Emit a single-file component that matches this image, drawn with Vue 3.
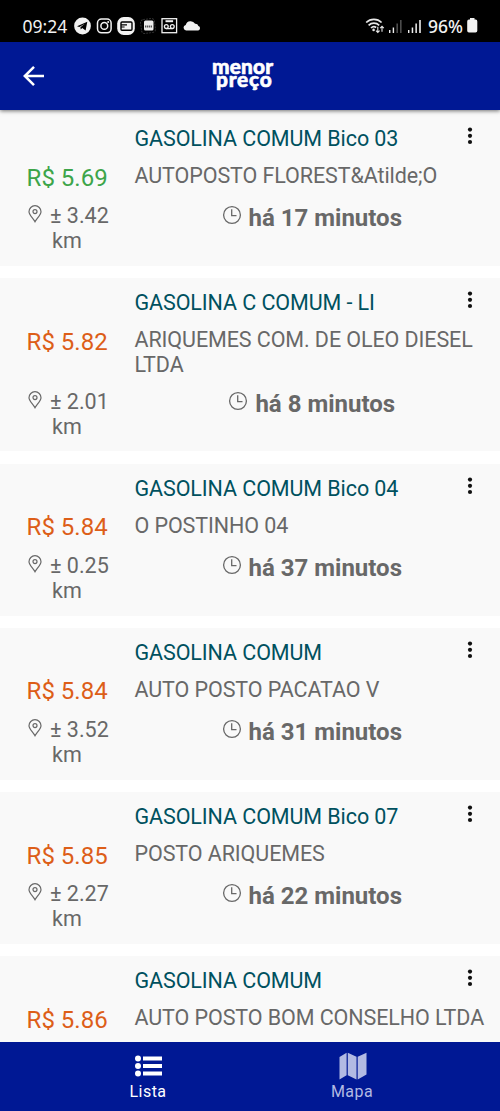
<script setup>
const stations = [
  { product: 'GASOLINA COMUM Bico 03', price: '5.69', name: 'AUTOPOSTO FLOREST&Atilde;O', km: '3.42', ago: '17', best: true },
  { product: 'GASOLINA C COMUM - LI', price: '5.82', name: 'ARIQUEMES COM. DE OLEO DIESEL LTDA', km: '2.01', ago: '8' },
  { product: 'GASOLINA COMUM Bico 04', price: '5.84', name: 'O POSTINHO 04', km: '0.25', ago: '37' },
  { product: 'GASOLINA COMUM', price: '5.84', name: 'AUTO POSTO PACATAO V', km: '3.52', ago: '31' },
  { product: 'GASOLINA COMUM Bico 07', price: '5.85', name: 'POSTO ARIQUEMES', km: '2.27', ago: '22' },
  { product: 'GASOLINA COMUM', price: '5.86', name: 'AUTO POSTO BOM CONSELHO LTDA' },
]
</script>

<template>
  <div class="screen">
    <div class="status">
      <span class="clock">09:24</span>
      <svg class="apps" width="128" height="20" viewBox="0 0 128 20">
        <circle cx="8.5" cy="10" r="8.4" fill="#f2f2f2" />
        <path d="M3 10.2 13.3 5.7 11.6 14.4 8.2 12 6.7 13.5 6.4 11.3 10.8 7.7 5.3 11Z" fill="#000" />
        <g fill="none" stroke="#f2f2f2">
          <rect x="23.5" y="3" width="13.6" height="13.8" rx="4" stroke-width="1.5" />
          <circle cx="30.3" cy="9.9" r="3.4" stroke-width="1.5" />
        </g>
        <circle cx="34.2" cy="6" r="1" fill="#f2f2f2" />
        <rect x="43.2" y="1" width="17.6" height="18" rx="6.5" fill="#f2f2f2" />
        <rect x="47" y="6" width="11" height="8.2" rx="1" fill="none" stroke="#000" stroke-width="1.4" />
        <path d="M47 8.8h6M47 11h3.6" fill="none" stroke="#000" stroke-width="1.2" />
        <rect x="67" y="3" width="14" height="14" rx="3" fill="none" stroke="#333" stroke-dasharray="2 1" transform="rotate(-8 74 10)" />
        <rect x="70" y="4.5" width="9.5" height="10" rx="1.5" fill="#ececec" />
        <path d="M71 10.4h7.5" stroke="#555" stroke-width="2" stroke-dasharray="1.3 .6" />
        <g fill="none" stroke="#f2f2f2" stroke-width="1.3">
          <rect x="88" y="2.7" width="14.6" height="14" />
          <path d="M91.5 5.2h7.6" stroke-width="2" />
          <circle cx="92.3" cy="10.6" r="1.9" />
          <circle cx="98.3" cy="10.6" r="1.9" />
          <path d="M92.3 12.6h6" />
        </g>
        <path d="M112 14.4a2.8 2.8 0 0 1-.3-5.5 5.2 5.2 0 0 1 9.4-1.1 3.2 3.2 0 0 1 3.3 2.3 2.2 2.2 0 0 1-.2 4.3Z" fill="#f2f2f2" />
      </svg>
      <svg class="signals" width="58" height="20" viewBox="0 0 58 20">
        <g fill="none" stroke="#e8e8e8" stroke-width="1.7">
          <path d="M1.2 6.5a11 11 0 0 1 15.4 0" />
          <path d="M3.6 9.3a7.6 7.6 0 0 1 10.6 0" />
          <path d="M6 12a4.2 4.2 0 0 1 5.2-.5" />
          <path d="M12.8 10.8v5.5m-1.8-1.6 1.8 1.8 1.8-1.8M17 15.8v-5.4m-1.8 1.8 1.8-1.8 1.8 1.8" stroke-width="1.1" />
        </g>
        <circle cx="8.6" cy="13.9" r="1.3" fill="#e8e8e8" />
        <g fill="#eee">
          <path d="M24 14h1.4v3H24zM27.7 11.5h1.4V17h-1.4zM43 14h1.4v3H43zM46.7 11.5h1.5V17h-1.5zM50.4 7.5h1.5V17h-1.5zM54.2 4h1.6v13h-1.6z" />
          <path d="M31.5 7.5h1.3V17h-1.3zM35.2 4h1.3v13h-1.3z" opacity=".4" />
        </g>
      </svg>
      <span class="percent">96%</span>
      <svg class="battery" width="11" height="15" viewBox="0 0 11 15">
        <path d="M3 0h4.5v1.6h1.2A1.8 1.8 0 0 1 10.3 3.4v9.4a1.8 1.8 0 0 1-1.8 1.8H2a1.8 1.8 0 0 1-1.8-1.8V3.4A1.8 1.8 0 0 1 2 1.6h1Z" fill="#f2f2f2" />
      </svg>
    </div>

    <header class="bar">
      <svg class="back" width="24" height="22" viewBox="0 0 24 22" fill="none" stroke="#fff" stroke-width="2.5">
        <path d="M22 11H3M12 1.8 2.8 11l9.2 9.2" />
      </svg>
      <div class="logo"><span class="menor">menor</span><span class="preco">preço</span></div>
    </header>

    <main class="list">
      <article v-for="(s, i) in stations" :key="i" class="card">
        <h2 class="product">{{ s.product }}</h2>
        <svg class="more" width="6" height="18" viewBox="0 0 6 18">
          <circle cx="3" cy="2.6" r="2.1" /><circle cx="3" cy="8.8" r="2.1" /><circle cx="3" cy="15" r="2.1" />
        </svg>
        <div class="price" :class="{ best: s.best }">R$ {{ s.price }}</div>
        <div class="name">{{ s.name }}</div>
        <div v-if="s.km" class="distance">
          <svg class="pin" width="14" height="18" viewBox="0 0 14 18" fill="none" stroke="#686868" stroke-width="1.2">
            <path d="M7 16.8C5 13.2 1 9.8 1 6.7a6 6 0 0 1 12 0C13 9.8 9 13.2 7 16.8Z" />
            <circle cx="7" cy="6.6" r="2" />
          </svg>
          <span>± {{ s.km }}<br /><span class="unit">km</span></span>
        </div>
        <div v-if="s.ago" class="time">
          <svg class="watch" width="20" height="20" viewBox="0 0 20 20" fill="none" stroke="#686868" stroke-width="1.3">
            <circle cx="10" cy="10" r="8.4" />
            <path d="M9.7 4.3v6.4h4.8" />
          </svg>
          <strong>há {{ s.ago }} minutos</strong>
        </div>
      </article>
    </main>

    <nav class="tabs">
      <div class="tab active">
        <svg width="28" height="28" viewBox="0 0 28 28" fill="#fff">
          <circle cx="4" cy="6.5" r="3" /><circle cx="4" cy="14" r="3" /><circle cx="4" cy="21.5" r="3" />
          <path d="M9 4.4h19v4.1H9zM9 12h19v4.1H9zM9 19.5h19v4.1H9z" />
        </svg>
        <span>Lista</span>
      </div>
      <div class="tab">
        <svg class="map" width="28" height="28" viewBox="0 0 28 28" fill="#b2bae3">
          <path d="M.5 5 7.6.8v22.4L.5 27.5ZM8.8.8l8.7 4v22.6l-8.7-4.2ZM18.7 4.800 27.500.8v21.800l-8.800 4.800Z" />
        </svg>
        <span>Mapa</span>
      </div>
    </nav>
  </div>
</template>

<style scoped>
.screen {
  width: 500px;
  height: 1111px;
  display: flex;
  flex-direction: column;
  overflow: hidden;
  background: #fff;
  font-family: Roboto, "Liberation Sans", sans-serif;
}
.status {
  flex: none;
  box-sizing: border-box;
  height: 42px;
  padding: 9px 22px 0 22.5px;
  display: flex;
  align-items: center;
  background: #000;
  color: #f2f2f2;
  font-family: "Noto Sans", sans-serif;
  font-size: 17.5px;
}
.clock { width: 51.5px; white-space: nowrap; }
.signals { margin-left: auto; margin-right: 5px; }
.percent { width: 39px; white-space: nowrap; font-weight: 500; }
.bar {
  flex: none;
  height: 68px;
  display: grid;
  grid-template-columns: 212px 1fr;
  background: #001894;
  box-shadow: 0 1px 4px rgba(0, 0, 0, .55);
  z-index: 1;
}
.back { margin: 23px 0 0 22px; }
.logo {
  padding-top: 16.500px;
  display: flex;
  flex-direction: column;
  color: #fff;
  font-family: Lato, sans-serif;
  font-weight: 900;
  font-size: 20.8px;
  line-height: 13.6px;
  -webkit-text-stroke: .6px #fff;
}
.menor { letter-spacing: .2px; }
.preco { padding-left: 4px; letter-spacing: .8px; }
.list {
  flex: 1;
  min-height: 0;
  overflow: hidden;
  padding-top: 4px;
  box-shadow: inset 0 4px #f9f9f9;
}
.card {
  display: grid;
  grid-template-columns: 134.5px 320px 1fr;
  grid-template-rows: 48px auto 1fr;
  box-sizing: border-box;
  min-height: 151.7px;
  padding-bottom: 12px;
  margin-bottom: 12.4px;
  background: #f9f9f9;
  color: #686868;
  font-size: 21.5px;
  line-height: 25px;
  letter-spacing: -.09px;
}
.product {
  grid-column: 1 / 3;
  margin: 12px 0 0 134.5px;
  font: inherit;
  color: #00515f;
}
.more { margin: 13px 0 0 12.5px; fill: #111; }
.price {
  padding: 1.5px 0 0 26.6px;
  min-height: 40px;
  box-sizing: border-box;
  line-height: 28px;
  font-size: 24px;
  color: #dd5e18;
  letter-spacing: 0;
}
.price.best { color: #3da54a; }
.name { grid-column: 2 / 4; padding: 1px 0 10.8px; }
.distance { display: flex; padding: 1px 0 0 28px; line-height: 25.3px; letter-spacing: 0; }
.distance > span { margin-left: 8px; white-space: nowrap; }
.unit { margin-left: 2px; }
.distance .pin { flex: none; margin-top: 2px; }
.time {
  grid-column: 2 / 4;
  display: flex;
  justify-content: center;
  padding: 3.8px 11px 0 0;
  font-size: 24px;
  letter-spacing: 0;
}
.watch { margin: -1px 7px 0 0; }
.tabs {
  flex: none;
  height: 69px;
  display: flex;
  justify-content: center;
  background: #001894;
}
.tab {
  width: 204px;
  padding-top: 10.4px;
  display: flex;
  flex-direction: column;
  align-items: center;
  color: #b2bae3;
  font-size: 16px;
  line-height: 23px;
  letter-spacing: .45px;
}
.tab.active { color: #fff; }
.map { margin-left: 2px; }
</style>

<style>
body { margin: 0; background: #fff; }
</style>
